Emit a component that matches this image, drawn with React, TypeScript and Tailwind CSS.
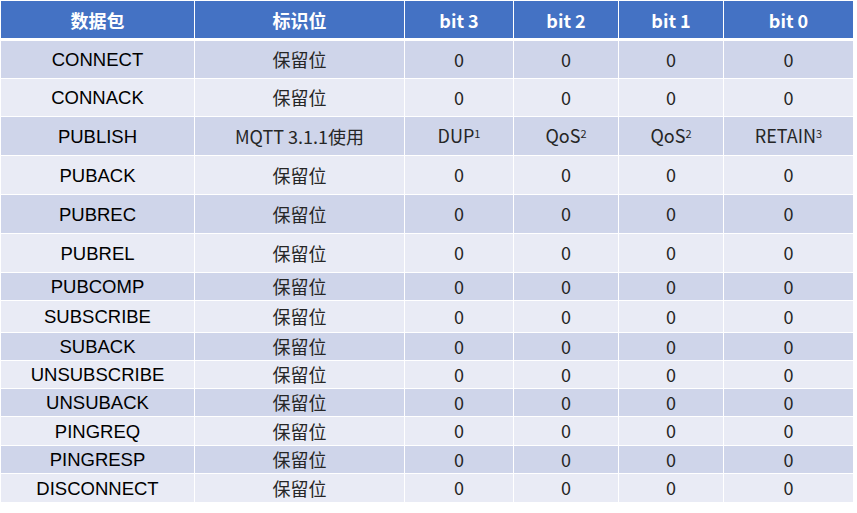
const headers = ['数据包', '标识位', 'bit 3', 'bit 2', 'bit 1', 'bit 0'];

type Row = { name: string; flag: string; bits: React.ReactNode[]; h: string };

const zeros = ['0', '0', '0', '0'];

const rows: Row[] = [
  { name: 'CONNECT', flag: '保留位', bits: zeros, h: 'h-[37px]' },
  { name: 'CONNACK', flag: '保留位', bits: zeros, h: 'h-[37px]' },
  {
    name: 'PUBLISH',
    flag: 'MQTT 3.1.1使用',
    bits: [
      <>DUP<sup className="text-[11px]">1</sup></>,
      <>QoS<sup className="text-[11px]">2</sup></>,
      <>QoS<sup className="text-[11px]">2</sup></>,
      <>RETAIN<sup className="text-[11px]">3</sup></>,
    ],
    h: 'h-[38px]',
  },
  { name: 'PUBACK', flag: '保留位', bits: zeros, h: 'h-[38px]' },
  { name: 'PUBREC', flag: '保留位', bits: zeros, h: 'h-[38px]' },
  { name: 'PUBREL', flag: '保留位', bits: zeros, h: 'h-[38px]' },
  { name: 'PUBCOMP', flag: '保留位', bits: zeros, h: 'h-[27px]' },
  { name: 'SUBSCRIBE', flag: '保留位', bits: zeros, h: 'h-[31px]' },
  { name: 'SUBACK', flag: '保留位', bits: zeros, h: 'h-[27px]' },
  { name: 'UNSUBSCRIBE', flag: '保留位', bits: zeros, h: 'h-[27px]' },
  { name: 'UNSUBACK', flag: '保留位', bits: zeros, h: 'h-[27px]' },
  { name: 'PINGREQ', flag: '保留位', bits: zeros, h: 'h-[28px]' },
  { name: 'PINGRESP', flag: '保留位', bits: zeros, h: 'h-[27px]' },
  { name: 'DISCONNECT', flag: '保留位', bits: zeros, h: 'h-[28px]' },
];

const cols = 'grid grid-cols-[193px_209px_108px_104px_104px_129px] gap-x-px';
const cjk = "font-['Noto_Sans_CJK_SC',sans-serif]";

export default function App() {
  return (
    <div className="h-[513px] w-[857px] bg-white pl-px pt-px">
      <div className={`${cols} h-[37px] bg-white`}>
        {headers.map((h) => (
          <div
            key={h}
            className={`flex items-center justify-center bg-[#4472c4] text-[18px] font-bold leading-none text-white ${cjk}`}
          >
            {h}
          </div>
        ))}
      </div>
      <div className="mt-[3px] flex flex-col gap-y-px">
        {rows.map((r, i) => {
          const bg = i % 2 === 0 ? 'bg-[#cfd5ea]' : 'bg-[#e9ebf5]';
          return (
            <div key={r.name} className={`${cols} ${r.h}`}>
              <div
                className={`flex items-center justify-center pt-[2px] ${bg} font-['Liberation_Sans',Arial,sans-serif] text-[18.5px] leading-none text-black`}
              >
                {r.name}
              </div>
              <div
                className={`flex items-center justify-center pb-[1px] ${bg} ${cjk} text-[18px] leading-none text-[#262626]`}
              >
                {r.flag}
              </div>
              {r.bits.map((b, j) => (
                <div
                  key={j}
                  className={`flex items-center justify-center pb-[2px] ${bg} ${cjk} text-[18px] leading-none text-[#262626]`}
                >
                  <span>{b}</span>
                </div>
              ))}
            </div>
          );
        })}
      </div>
    </div>
  );
}
